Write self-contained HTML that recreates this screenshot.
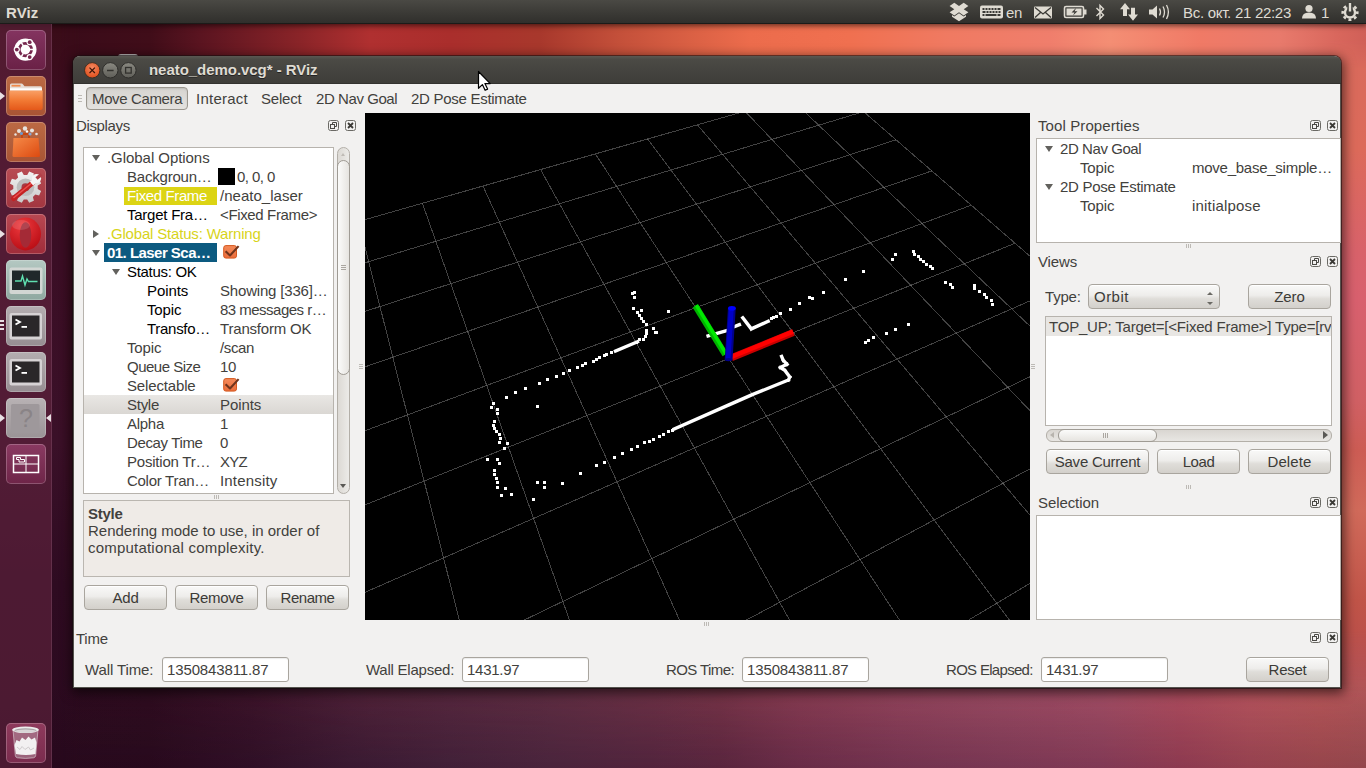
<!DOCTYPE html>
<html><head><meta charset="utf-8"><title>RViz</title>
<style>
*{box-sizing:border-box;margin:0;padding:0}
html,body{width:1366px;height:768px;overflow:hidden}
body{position:relative;font-family:"Liberation Sans",sans-serif;font-size:15px;color:#42413d;background:#2c0a1e;}
.abs,.t,.t2,.b,.box,.inp{position:absolute}
#wall{position:absolute;left:0;top:0;width:1366px;height:768px;background:#2c0a1e;overflow:hidden}
#wall div{position:absolute}
#wb{left:0;top:0;width:1366px;height:768px;background:linear-gradient(90deg,#2b0b1f 0,#2c0c20 150px,#34122a 250px,#401e38 350px,#4a2640 450px,#542b45 550px,#5d2b46 650px,#662c47 720px,#783452 800px,#843c5b 900px,#8c4260 1000px,#954462 1100px,#a3455c 1180px,#ad4e5b 1250px,#af5257 1320px,#ac5458 1366px)}
#wt{left:0;top:0;width:1366px;height:768px;background:linear-gradient(90deg,#36091a 0,#390b19 60px,#400d19 150px,#5a1420 200px,#8a2428 300px,#b03030 370px,#aa2e2c 450px,#a8382c 540px,#c4503a 620px,#da6044 690px,#ec6c4c 750px,#f07050 850px,#f07a62 950px,#f07e6c 1050px,#f48e74 1110px,#f07a66 1200px,#e87a6c 1280px,#d8665c 1340px,#d06058 1366px);
 -webkit-mask-image:linear-gradient(#000 0,#000 60px,rgba(0,0,0,.85) 300px,rgba(0,0,0,.55) 520px,rgba(0,0,0,.15) 680px,transparent 768px);mask-image:linear-gradient(#000 0,#000 60px,rgba(0,0,0,.85) 300px,rgba(0,0,0,.55) 520px,rgba(0,0,0,.15) 680px,transparent 768px)}
#wr{left:1330px;top:40px;width:36px;height:728px;background:linear-gradient(#d86a5c 0,#dc6a5a 110px,#d8626a 210px,#d8606e 260px,#d06064 360px,#cc5c54 410px,#d06a5a 470px,#c05448 560px,#b64c4c 640px,#b04a50 680px,#a84a58 728px);
 -webkit-mask-image:linear-gradient(transparent 0,#000 30px,#000 590px,transparent 652px);mask-image:linear-gradient(transparent 0,#000 30px,#000 590px,transparent 652px)}
#wl{left:0;top:24px;width:80px;height:744px;background:linear-gradient(#3a0c18 0,#3c0d20 80px,#3b0e25 230px,#3a1028 420px,#2e0b21 560px,#2b0a1f 744px);
 -webkit-mask-image:linear-gradient(90deg,#000 0,#000 60px,transparent 80px);mask-image:linear-gradient(90deg,#000 0,#000 60px,transparent 80px)}
#wd{left:0;top:684px;width:1366px;height:84px;background:linear-gradient(rgba(20,0,16,0),rgba(20,0,16,.16))}
/* top panel */
#panel{position:absolute;left:0;top:0;width:1366px;height:24px;background:linear-gradient(#4a4944,#3a3935 60%,#302f2c);color:#dfdbd2;border-bottom:1px solid #1c1b19;box-shadow:0 1px 5px 1px rgba(0,0,0,.55)}
#panel .t{color:#dfdbd2;top:3px;white-space:nowrap}
/* launcher */
#launcher{position:absolute;left:0;top:24px;width:52px;height:744px;background:rgba(98,36,64,.6);border-right:1px solid rgba(150,100,130,.3)}
.tile{position:absolute;left:6px;width:40px;height:40px;border-radius:5px;overflow:hidden;box-shadow:inset 0 0 0 1px rgba(255,255,255,.22)}
.tri{position:absolute;width:0;height:0;border-top:4px solid transparent;border-bottom:4px solid transparent}
.tri.l{left:0;border-left:5px solid #e8e0e4}
.tri.r{left:46px;border-right:5px solid #e8e0e4}
/* window */
#win{position:absolute;left:73px;top:56px;width:1268px;height:632px;background:#f2f1f0;border:1px solid #55534e;border-top:0;border-radius:7px 7px 0 0;box-shadow:1px 3px 12px 2px rgba(0,0,0,.6),0 0 0 1px rgba(30,20,20,.55)}
#title{position:absolute;left:0;top:0;width:1268px;height:28px;border-radius:7px 7px 0 0;background:linear-gradient(#5a5852 0,#4b4a45 12%,#3e3d39 100%);border-bottom:1px solid #33322f}
.t,.t2{white-space:nowrap;line-height:19px;height:19px}
.b{border:1px solid #a9a59e;border-radius:4px;background:linear-gradient(#f9f9f8 0,#eeedeb 45%,#dfddd9 60%,#d3d0cb 100%);text-align:center;line-height:24px;color:#3c3b37;box-shadow:inset 0 1px 0 #fff}
.box{background:#fff;border:1px solid #b7b3ad}
.inp{background:#fff;border:1px solid #a9a59e;border-radius:3px;line-height:23px;padding-left:4px;height:25px;top:657px;width:127px;box-shadow:inset 0 1px 1px rgba(0,0,0,.08)}
.ic{position:absolute;width:11px;height:11px}
.arrow{position:absolute;width:0;height:0}
.ad{border-left:4px solid transparent;border-right:4px solid transparent;border-top:6px solid #62615d}
.ar{border-top:4px solid transparent;border-bottom:4px solid transparent;border-left:6px solid #62615d}
</style></head><body>
<div id="wall"><div id="wb"></div><div id="wt"></div><div id="wr"></div><div id="wl"></div><div id="wd"></div></div>
<div id="panel">
<div class="t" style="left:6px;font-weight:bold;font-size:15px;letter-spacing:0.133px">RViz</div>
<svg class="abs" style="left:948px;top:2px" width="420" height="20" viewBox="948 2 420 20" fill="#dfdbd2" stroke="none">
<!-- dropbox-like -->
<path d="M954.300 2.800l4.700 3.200-4.700 3.200-4.700-3.200zM963.700 2.800l4.700 3.200-4.700 3.200-4.700-3.200zM959 6l4.700 3.200 4.700 3.100-4.700 3.200-4.700-3.200-4.700 3.200-4.700-3.200 4.700-3.100zM959 13.300l4.700 3.200 2.300-1.500v1.800l-7 4.400-7-4.400v-1.800l2.300 1.500z"/>
<!-- keyboard -->
<rect x="980" y="5.500" width="23" height="13" rx="2"/>
<g fill="#3a3935"><rect x="982.500" y="8" width="2" height="2"/><rect x="985.500" y="8" width="2" height="2"/><rect x="988.500" y="8" width="2" height="2"/><rect x="991.500" y="8" width="2" height="2"/><rect x="994.500" y="8" width="2" height="2"/><rect x="997.500" y="8" width="3" height="2"/>
<rect x="982.500" y="11" width="3" height="2"/><rect x="986.500" y="11" width="2" height="2"/><rect x="989.500" y="11" width="2" height="2"/><rect x="992.500" y="11" width="2" height="2"/><rect x="995.500" y="11" width="2" height="2"/><rect x="998.500" y="11" width="2" height="2"/>
<rect x="982.500" y="14" width="2" height="2"/><rect x="985.500" y="14" width="11" height="2"/><rect x="997.500" y="14" width="3" height="2"/></g>
<!-- mail -->
<rect x="1034" y="6.500" width="18" height="12" rx="1"/>
<path d="M1035 7.500l8 6.500 8-6.500M1035 17.500l5.500-5M1051 17.500l-5.500-5" stroke="#3a3935" stroke-width="1.300" fill="none"/>
<!-- battery -->
<rect x="1064.500" y="6.500" width="19" height="11" rx="1.500" fill="none" stroke="#dfdbd2" stroke-width="1.600"/>
<rect x="1084" y="9.500" width="2.500" height="5"/>
<rect x="1066.500" y="8.500" width="15" height="7" fill="#dfdbd2"/>
<path d="M1075.500 8.500l-4 4h3l-1.500 3 4.500-4.200h-3l1.500-2.800z" fill="#3a3935"/>
<!-- bluetooth -->
<path d="M1096.500 8l7 7-3.500 3.500v-13l3.500 3.500-7 7" fill="none" stroke="#dfdbd2" stroke-width="1.400"/>
<!-- network arrows -->
<path d="M1125 3l5 6.200h-3v6.800h-4v-6.800h-3z"/>
<path d="M1133 20.800l-5-6.200h3v-6.800h4v6.800h3z"/>
<!-- sound -->
<path d="M1149 9.500h3.500l4.500-4v13l-4.500-4h-3.500z"/>
<path d="M1159.500 8.500q2 3.500 0 7M1163 6.500q3 5.500 0 11M1166.500 5q3.800 7 0 14" fill="none" stroke="#dfdbd2" stroke-width="1.300"/>
<!-- user -->
<circle cx="1309" cy="8.500" r="3.600"/>
<path d="M1302 18.500q0-6 7-6t7 6z"/>
<!-- power cog -->
<g transform="translate(1350 12.500)"><circle r="7.300" fill="none" stroke="#dfdbd2" stroke-width="2.600" stroke-dasharray="2.900 2.834" stroke-dashoffset="1.450"/>
<circle r="5" fill="none" stroke="#dfdbd2" stroke-width="2.400"/><rect x="-2.700" y="-10" width="5.400" height="9" fill="#3d3c38"/><rect x="-1.200" y="-9.500" width="2.400" height="8.500" fill="#dfdbd2"/></g>
</svg>
<div class="t" style="left:1006px;font-size:15px;letter-spacing:-0.344px">en</div>
<div class="t" style="left:1183px;font-size:15px;letter-spacing:-0.286px" id="clock">Вс. окт. 21 22:23</div>
<div class="t" style="left:1321px;font-size:15px">1</div>
</div>

<div id="launcher">
<!-- tops are relative to launcher (panel 24px) -->
<div class="tile" style="top:6px;background:linear-gradient(#843460,#6a2146)">
<svg width="40" height="40" viewBox="0 0 40 40"><circle cx="19.4" cy="19.6" r="11.1" fill="#fff"/><circle cx="19.4" cy="19.6" r="6.2" fill="none" stroke="#76284e" stroke-width="2.7"/><line x1="23.70" y1="19.60" x2="27.70" y2="19.60" stroke="#fff" stroke-width="1.5"/><line x1="17.25" y1="23.32" x2="15.25" y2="26.79" stroke="#fff" stroke-width="1.5"/><line x1="17.25" y1="15.88" x2="15.25" y2="12.41" stroke="#fff" stroke-width="1.5"/><circle cx="23.70" cy="12.15" r="3.1" fill="#fff"/><circle cx="23.70" cy="12.15" r="1.9" fill="#76284e"/><circle cx="10.80" cy="19.60" r="3.1" fill="#fff"/><circle cx="10.80" cy="19.60" r="1.9" fill="#76284e"/><circle cx="23.70" cy="27.05" r="3.1" fill="#fff"/><circle cx="23.70" cy="27.05" r="1.9" fill="#76284e"/></svg></div>
<div class="tile" style="top:52px;background:linear-gradient(#bc6a44,#a85434)">
<svg width="40" height="40" viewBox="0 0 40 40"><defs><linearGradient id="fg" x1="0" y1="0" x2="0" y2="1"><stop offset="0" stop-color="#f9a066"/><stop offset=".5" stop-color="#f27a34"/><stop offset="1" stop-color="#e4581a"/></linearGradient></defs>
<path d="M4 9q0-1.500 1.500-1.500h10q1 0 1.600.9l1.400 1.900h16q1.500 0 1.500 1.500v4h-32z" fill="#e6ddd6"/><rect x="5.500" y="8.800" width="9" height="1.800" fill="#f08848"/><rect x="4" y="12.300" width="32" height="2.200" fill="#fff"/>
<path d="M3.300 14.500h33.400v17.500q0 2-2 2h-29.400q-2 0-2-2z" fill="url(#fg)"/></svg></div>
<div class="tile" style="top:98px;background:linear-gradient(#bc6a44,#a85434)">
<svg width="40" height="40" viewBox="0 0 40 40"><defs><linearGradient id="bg2" x1="0" y1="0" x2="1" y2="1"><stop offset="0" stop-color="#f68a48"/><stop offset="1" stop-color="#dc4a10"/></linearGradient></defs>
<path d="M16 17v-3.500q0-1.500 1.500-1.500h4q1.500 0 1.500 1.500v3.500" stroke="#c8440e" stroke-width="1.800" fill="none"/>
<path d="M7.500 16h25l1.500 17.500q0 1.500-1.500 1.500h-24.500q-1.500 0-1.500-1.500z" fill="url(#bg2)"/>
<g fill="#e8e4e0"><circle cx="13" cy="9" r="2"/><circle cx="19" cy="6.500" r="2.200"/><circle cx="26" cy="8.500" r="2"/><circle cx="30.500" cy="12" r="1.300"/><circle cx="9.500" cy="12.500" r="1.200"/></g><circle cx="15.500" cy="11.500" r="1.500" fill="#6a9ad0"/><circle cx="24" cy="12" r="1.600" fill="#88a8d8"/><circle cx="21" cy="9.500" r="1.200" fill="#fff"/></svg></div>
<div class="tile" style="top:144px;background:linear-gradient(#b84c54,#a23640)">
<svg width="40" height="40" viewBox="0 0 40 40"><defs><linearGradient id="gg" x1="0" y1="0" x2="0" y2="1"><stop offset="0" stop-color="#f2f2f2"/><stop offset="1" stop-color="#c9c9c9"/></linearGradient></defs>
<path d="M31.7 20.9L35.1 22.9L33.1 27.6L29.3 26.6L26.9 29.0L27.9 32.8L23.2 34.8L21.2 31.4L17.8 31.4L15.8 34.8L11.1 32.8L12.1 29.0L9.7 26.6L5.9 27.6L3.9 22.9L7.3 20.9L7.3 17.5L3.9 15.5L5.9 10.8L9.7 11.8L12.1 9.4L11.1 5.6L15.8 3.6L17.8 7.0L21.2 7.0L23.2 3.6L27.9 5.6L26.9 9.4L29.3 11.8L33.1 10.8L35.1 15.5L31.7 17.5z" fill="url(#gg)"/><circle cx="19.5" cy="19.2" r="8.8" fill="#bdbdbd"/><circle cx="19.5" cy="19.2" r="4" fill="#a63a44"/>
<path d="M7.500 30.500l19.500-16" stroke="#c42222" stroke-width="5" stroke-linecap="round"/><path d="M8 29.500l19-15.500" stroke="#e85050" stroke-width="1.600" stroke-linecap="round"/>
<path d="M25.500 15.500l3.500-3" stroke="#f4f4f4" stroke-width="5"/><circle cx="30.500" cy="10.500" r="4.600" fill="#f4f4f4"/><path d="M30.500 10.500l5-4" stroke="#b04048" stroke-width="3.400"/></svg></div>
<div class="tile" style="top:190px;background:linear-gradient(#b84852,#a02c3a)">
<svg width="40" height="40" viewBox="0 0 40 40"><defs><radialGradient id="og" cx="40%" cy="25%" r="80%"><stop offset="0" stop-color="#ee3a3e"/><stop offset="1" stop-color="#b80c14"/></radialGradient></defs>
<ellipse cx="19.500" cy="20" rx="15.500" ry="16.400" fill="url(#og)"/><ellipse cx="19.500" cy="21" rx="5.800" ry="12.800" fill="#a42a36"/><ellipse cx="15" cy="11" rx="9" ry="5" fill="#fff" opacity=".13"/></svg></div>
<div class="tile" style="top:236px;background:linear-gradient(#b4c8c2,#8fa8a0)">
<svg width="40" height="40" viewBox="0 0 40 40"><rect x="3.500" y="7.500" width="33" height="26.500" rx="2" fill="#d2d6d3"/><rect x="6" y="10.500" width="28" height="19.500" fill="#20282a"/><path d="M9 21h6l1.500-5 2.500 9 2-6 1.500 2.500h9" stroke="#5fe0b0" stroke-width="1.400" fill="none"/></svg></div>
<div class="tile" style="top:282px;background:linear-gradient(#b4adb0,#968e92)">
<svg width="40" height="40" viewBox="0 0 40 40"><rect x="3.500" y="7" width="32.500" height="26.500" rx="2" fill="#d6d2d4"/><rect x="6" y="9.500" width="27.500" height="21" fill="#2a2729"/><path d="M9.500 13.500l4.500 2.500-4.500 2.500" stroke="#fff" stroke-width="1.800" fill="none"/><rect x="15.500" y="20" width="5.500" height="1.800" fill="#fff"/></svg></div>
<div class="tile" style="top:328px;background:linear-gradient(#b4adb0,#968e92)">
<svg width="40" height="40" viewBox="0 0 40 40"><rect x="3.500" y="7" width="32.500" height="26.500" rx="2" fill="#d6d2d4"/><rect x="6" y="9.500" width="27.500" height="21" fill="#2a2729"/><path d="M9.500 13.500l4.500 2.500-4.500 2.500" stroke="#fff" stroke-width="1.800" fill="none"/><rect x="15.500" y="20" width="5.500" height="1.800" fill="#fff"/></svg></div>
<div class="tile" style="top:374px;background:linear-gradient(#b8b2b4,#9a9396)">
<svg width="40" height="40" viewBox="0 0 40 40"><rect x="5" y="6" width="28.500" height="28.500" rx="1.500" fill="#9e989b"/><text x="20" y="29" font-family="Liberation Sans,sans-serif" font-size="25" text-anchor="middle" fill="#8a8487">?</text></svg></div>
<div class="tile" style="top:420px;background:linear-gradient(#8a3a62,#6e2548)">
<svg width="40" height="40" viewBox="0 0 40 40"><rect x="7.500" y="11.500" width="25" height="17" fill="none" stroke="#fff" stroke-width="1.500"/><line x1="20" y1="11.500" x2="20" y2="28.500" stroke="#fff" stroke-width="1"/><line x1="7.500" y1="20" x2="32.500" y2="20" stroke="#fff" stroke-width="1"/><path d="M10.500 13.500h4v2h4v2.500h-5.500v-2.500h-2.500z" fill="none" stroke="#fff" stroke-width="1"/></svg></div>
<div class="tile" style="top:699px;background:linear-gradient(#8e3a5c,#7a2c4e)">
<svg width="40" height="40" viewBox="0 0 40 40"><path d="M7 6.500l2.300 26q.2 2 2.200 2.300 8 1.200 16 0 2-.3 2.200-2.300l2.300-26z" fill="#d8d0d6" opacity=".33"/>
<path d="M8.500 22l2-5 3 1.500 2.500-4 3.500 2.500 3-3.500 3 3 3.500-2 1.500 5-1 11.500q-9.500 2-19.500 0z" fill="#f2f0f1"/>
<path d="M11 24l3 2.500 2-3 3 3 3.500-2.500 2 3 3.500-2" stroke="#cfcbcd" stroke-width="1" fill="none"/>
<path d="M7 6.500l2.300 26q.2 2 2.200 2.300 8 1.200 16 0 2-.3 2.200-2.300l2.300-26" fill="none" stroke="#e6e2e4" stroke-width=".8" opacity=".7"/>
<ellipse cx="19.500" cy="6.800" rx="13.300" ry="3.300" fill="#ecebeb"/><ellipse cx="19.500" cy="7.300" rx="11.200" ry="2" fill="#a9a3a6"/><ellipse cx="19.500" cy="8.100" rx="10.500" ry="1.500" fill="#d9d5d7"/></svg></div>
<div class="tri l" style="top:68px"></div>
<div class="tri l" style="top:206px"></div>
<div class="tri l" style="top:390px"></div>
<div class="tri r" style="top:390px"></div>
<div class="abs" style="left:0;top:296px;width:4px;height:2px;background:#e8e0e4;box-shadow:0 4px 0 #e8e0e4,0 8px 0 #e8e0e4"></div>
</div>

<div class="abs" style="left:118px;top:54px;width:20px;height:4px;background:#b9b4b4;border-radius:3px 3px 0 0"></div>
<div id="win"><div id="title" style="left:-1px"></div>
<div id="wc" class="abs" style="left:-74px;top:-56px;width:0;height:0">
<!-- title bar -->
<svg class="abs" style="left:82px;top:60px" width="60" height="22" viewBox="82 60 60 22">
<defs><radialGradient id="cb" cx="50%" cy="35%" r="70%"><stop offset="0" stop-color="#f58a62"/><stop offset="1" stop-color="#dd4814"/></radialGradient>
<linearGradient id="gb" x1="0" y1="0" x2="0" y2="1"><stop offset="0" stop-color="#8a8981"/><stop offset="1" stop-color="#5f5e58"/></linearGradient></defs>
<circle cx="92.200" cy="70.300" r="7.700" fill="url(#cb)" stroke="#3a3026" stroke-width="1"/>
<path d="M89.500 67.600l5.400 5.400M94.900 67.600l-5.400 5.400" stroke="#3a1408" stroke-width="1.200"/>
<circle cx="110.300" cy="70.300" r="7.700" fill="url(#gb)" stroke="#2e2d2a" stroke-width="1"/>
<path d="M107 70.500h6.600" stroke="#33322e" stroke-width="1.500"/>
<circle cx="128.400" cy="70.300" r="7.700" fill="url(#gb)" stroke="#2e2d2a" stroke-width="1"/>
<rect x="125.600" y="67.500" width="5.600" height="5.600" fill="none" stroke="#33322e" stroke-width="1.300"/>
</svg>
<div class="t" id="wtitle" style="left:149px;top:60px;font-weight:bold;font-size:15px;color:#dfdbd2;text-shadow:0 1px 0 #222;letter-spacing:-0.045px">neato_demo.vcg* - RViz</div>
<!-- toolbar -->
<div class="abs" style="left:78px;top:95px;width:4px;height:1px;background:#bdbab5;box-shadow:0 3px 0 #bdbab5,0 6px 0 #bdbab5"></div>
<div class="abs" style="left:86px;top:87px;width:102px;height:23px;border:1px solid #9b978f;border-radius:4px;background:linear-gradient(#d6d4d0,#e4e2df);box-shadow:inset 0 1px 2px rgba(0,0,0,.12)"></div>
<div class="t tb" style="left:92px;top:89px;letter-spacing:-0.364px">Move Camera</div>
<div class="t tb" style="left:196px;top:89px;letter-spacing:0.246px">Interact</div>
<div class="t tb" style="left:261px;top:89px;letter-spacing:-0.201px">Select</div>
<div class="t tb" style="left:316px;top:89px;letter-spacing:-0.425px">2D Nav Goal</div>
<div class="t tb" style="left:411px;top:89px;letter-spacing:-0.279px">2D Pose Estimate</div>
<!-- Displays dock -->
<div class="t" style="left:76px;top:116px;letter-spacing:-0.348px">Displays</div>
<svg class="abs" style="left:328px;top:120px" width="28" height="11" viewBox="0 0 28 11" fill="none" stroke="#4a4945"><rect x=".5" y=".5" width="10" height="10" rx="2" stroke="#6a6964"/><rect x="2.500" y="4.500" width="4" height="4" stroke-width="1"/><path d="M4.500 4v-1.500h4v4h-1.500" stroke-width="1"/><rect x="17.500" y=".5" width="10" height="10" rx="2" stroke="#6a6964"/><path d="M20 3l5 5M25 3l-5 5" stroke-width="1.800" stroke="#3a3935"/></svg>
<div class="box" style="left:83px;top:147px;width:251px;height:347px"></div>
<div class="abs" style="left:124px;top:187px;width:93px;height:18px;background:#dcd414"></div>
<div class="abs" style="left:104px;top:243px;width:113px;height:19px;background:#0c5a80"></div>
<div class="abs" style="left:84px;top:395px;width:249px;height:19px;background:linear-gradient(#e9e7e4,#dad7d3)"></div>
<div class="arrow ad" style="left:92px;top:155px"></div>
<div class="t" style="left:107px;top:148px;letter-spacing:-0.053px">.Global Options</div>
<div class="t" style="left:127px;top:167px;letter-spacing:-0.212px">Backgroun…</div>
<div class="abs" style="left:218px;top:168px;width:17px;height:17px;background:#000"></div>
<div class="t" style="left:237px;top:167px;letter-spacing:-0.558px">0, 0, 0</div>
<div class="t" style="left:127px;top:186px;color:#fff;letter-spacing:-0.390px">Fixed Frame</div>
<div class="t" style="left:220px;top:186px;letter-spacing:0.020px">/neato_laser</div>
<div class="t" style="left:127px;top:205px;color:#000;letter-spacing:-0.242px">Target Fra…</div>
<div class="t" style="left:220px;top:205px;letter-spacing:-0.355px">&lt;Fixed Frame&gt;</div>
<div class="arrow ar" style="left:93px;top:230px"></div>
<div class="t" style="left:107px;top:224px;color:#d8d41a;letter-spacing:-0.181px">.Global Status: Warning</div>
<div class="arrow ad" style="left:92px;top:250px"></div>
<div class="t" style="left:107px;top:243px;color:#fff;font-weight:bold;letter-spacing:-0.536px">01. Laser Sca…</div>
<svg class="abs" style="left:223px;top:244px" width="18" height="16" viewBox="0 0 18 16"><defs><linearGradient id="ck" x1="0" y1="0" x2="0" y2="1"><stop offset="0" stop-color="#f48a5a"/><stop offset="1" stop-color="#ea6c3a"/></linearGradient></defs><rect x=".7" y="1.600" width="12.800" height="12.500" rx="2.200" fill="url(#ck)" stroke="#d4581e"/><path d="M2.600 7.200l4.400 4.300 8.600-9.400" fill="none" stroke="#70341c" stroke-width="2.100" stroke-linejoin="round"/></svg>
<div class="arrow ad" style="left:112px;top:269px"></div>
<div class="t" style="left:127px;top:262px;color:#000;letter-spacing:-0.305px">Status: OK</div>
<div class="t" style="left:147px;top:281px;color:#000;letter-spacing:-0.084px">Points</div>
<div class="t" style="left:220px;top:281px;letter-spacing:-0.184px">Showing [336]…</div>
<div class="t" style="left:147px;top:300px;color:#000;letter-spacing:-0.126px">Topic</div>
<div class="t" style="left:220px;top:300px;letter-spacing:-0.514px">83 messages r…</div>
<div class="t" style="left:147px;top:319px;color:#000;letter-spacing:-0.287px">Transfo…</div>
<div class="t" style="left:220px;top:319px;letter-spacing:-0.187px">Transform OK</div>
<div class="t" style="left:127px;top:338px;letter-spacing:-0.126px">Topic</div>
<div class="t" style="left:220px;top:338px;letter-spacing:-0.352px">/scan</div>
<div class="t" style="left:127px;top:357px;letter-spacing:-0.499px">Queue Size</div>
<div class="t" style="left:220px;top:357px;letter-spacing:-0.444px">10</div>
<div class="t" style="left:127px;top:376px;letter-spacing:-0.156px">Selectable</div>
<svg class="abs" style="left:223px;top:377px" width="18" height="16" viewBox="0 0 18 16"><defs><linearGradient id="ck" x1="0" y1="0" x2="0" y2="1"><stop offset="0" stop-color="#f48a5a"/><stop offset="1" stop-color="#ea6c3a"/></linearGradient></defs><rect x=".7" y="1.600" width="12.800" height="12.500" rx="2.200" fill="url(#ck)" stroke="#d4581e"/><path d="M2.600 7.200l4.400 4.300 8.600-9.400" fill="none" stroke="#70341c" stroke-width="2.100" stroke-linejoin="round"/></svg>
<div class="t" style="left:127px;top:395px;letter-spacing:-0.272px">Style</div>
<div class="t" style="left:220px;top:395px;letter-spacing:-0.084px">Points</div>
<div class="t" style="left:127px;top:414px;letter-spacing:-0.275px">Alpha</div>
<div class="t" style="left:220px;top:414px">1</div>
<div class="t" style="left:127px;top:433px;letter-spacing:-0.370px">Decay Time</div>
<div class="t" style="left:220px;top:433px">0</div>
<div class="t" style="left:127px;top:452px;letter-spacing:-0.215px">Position Tr…</div>
<div class="t" style="left:220px;top:452px;letter-spacing:-0.700px">XYZ</div>
<div class="t" style="left:127px;top:471px;letter-spacing:-0.276px">Color Tran…</div>
<div class="t" style="left:220px;top:471px;letter-spacing:0.181px">Intensity</div>
<!-- scrollbar -->
<div class="abs" style="left:337px;top:147px;width:13px;height:347px;border:1px solid #b3afa8;border-radius:6.5px;background:linear-gradient(90deg,#dcd9d4,#ecebe8)"></div>
<div class="abs" style="left:337px;top:160px;width:13px;height:215px;border:1px solid #9f9b94;border-radius:6.5px;background:linear-gradient(90deg,#fbfbfa,#e6e4e0)"></div>
<div class="abs" style="left:341px;top:265px;width:5px;height:1px;background:#aaa6a0;box-shadow:0 2px 0 #aaa6a0,0 4px 0 #aaa6a0"></div>
<div class="arrow" style="left:341px;top:153px;border-left:2.5px solid transparent;border-right:2.5px solid transparent;border-bottom:3px solid #c0bcb6"></div>
<div class="arrow" style="left:340px;top:484px;border-left:3.5px solid transparent;border-right:3.5px solid transparent;border-top:4px solid #5a5955"></div>
<!-- description -->
<div class="abs" style="left:83px;top:500px;width:267px;height:77px;background:#efebe7;border:1px solid #bab6b0"></div>
<div class="t2" style="left:88px;top:504px;font-weight:bold;letter-spacing:-0.1px;letter-spacing:-0.272px">Style</div>
<div class="t" style="left:88px;top:521px;letter-spacing:-0.015px" id="d1">Rendering mode to use, in order of</div>
<div class="t" style="left:88px;top:538px;letter-spacing:0.205px" id="d2">computational complexity.</div>
<div class="b" style="left:84px;top:585px;width:83px;height:25px;letter-spacing:-0.201px">Add</div>
<div class="b" style="left:175px;top:585px;width:83px;height:25px;letter-spacing:-0.327px">Remove</div>
<div class="b" style="left:266px;top:585px;width:83px;height:25px;letter-spacing:-0.467px">Rename</div>
<!-- splitter grips -->
<div class="abs" style="left:214px;top:495px;width:1px;height:4px;background:#bdbab5;box-shadow:2px 0 0 #bdbab5,4px 0 0 #bdbab5"></div>
<div class="abs" style="left:704px;top:622px;width:1px;height:4px;background:#bdbab5;box-shadow:2px 0 0 #bdbab5,4px 0 0 #bdbab5"></div>
<div class="abs" style="left:359px;top:364px;width:4px;height:1px;background:#bdbab5;box-shadow:0 2px 0 #bdbab5,0 4px 0 #bdbab5"></div>
<div class="abs" style="left:1031px;top:364px;width:4px;height:1px;background:#bdbab5;box-shadow:0 2px 0 #bdbab5,0 4px 0 #bdbab5"></div>
<div class="abs" style="left:1186px;top:244px;width:1px;height:4px;background:#bdbab5;box-shadow:2px 0 0 #bdbab5,4px 0 0 #bdbab5"></div>
<div class="abs" style="left:1186px;top:485px;width:1px;height:4px;background:#bdbab5;box-shadow:2px 0 0 #bdbab5,4px 0 0 #bdbab5"></div>
<!-- 3D view -->
<svg class="view" style="position:absolute;left:365px;top:113px" width="665" height="507" viewBox="365 113 665 507">
<rect x="365" y="113" width="665" height="507" fill="#000"/>
<path d="M428.3 1138.3L291.1 240.8M566.6 1044.3L358.5 221.6M689.6 960.6L422.4 203.3M799.8 885.7L483.0 186.0M899.0 818.2L540.6 169.6M988.9 757.1L595.4 153.9M1070.7 701.5L647.6 139.0M1145.5 650.7L697.4 124.8M1214.0 604.1L745.0 111.2M1277.1 561.2L790.4 98.3M1335.4 521.6L833.9 85.8" stroke="#848484" stroke-opacity=".5" stroke-width="1" fill="none" shape-rendering="crispEdges"/>
<path d="M428.3 1138.3L1335.4 521.6M401.0 959.3L1253.1 450.0M379.0 815.9L1181.7 388.0M361.1 698.5L1119.2 333.8M346.1 600.6L1064.1 285.9M333.4 517.6L1015.1 243.3M322.6 446.5L971.3 205.2M313.1 384.8L931.8 170.9M304.9 330.8L896.1 139.8M297.6 283.2L863.6 111.6M291.1 240.8L833.9 85.8" stroke="#848484" stroke-opacity=".5" stroke-width="1" fill="none" shape-rendering="crispEdges"/>
<path d="M538 382h3v3h-3zM546 378h3v3h-3zM524 387h3v3h-3zM514 391h3v3h-3zM505 396h3v3h-3zM492 402h3v3h-3zM490 406h3v3h-3zM496 408h3v3h-3zM496 412h3v3h-3zM536 405h3v3h-3zM493 420h3v3h-3zM492 424h3v3h-3zM493 427h3v3h-3zM495 430h3v3h-3zM498 433h3v3h-3zM499 437h3v3h-3zM498 441h3v3h-3zM506 442h3v3h-3zM503 447h3v3h-3zM486 458h3v3h-3zM496 458h3v3h-3zM498 462h3v3h-3zM493 469h3v3h-3zM493 473h3v3h-3zM495 477h3v3h-3zM496 481h3v3h-3zM496 486h3v3h-3zM504 487h3v3h-3zM500 494h3v3h-3zM510 493h3v3h-3zM536 481h3v3h-3zM543 481h3v3h-3zM543 486h3v3h-3zM532 498h3v3h-3zM561 482h3v3h-3zM579 472h3v3h-3zM595 464h3v3h-3zM603 461h3v3h-3zM613 456h3v3h-3zM631 292h3v3h-3zM633 291h3v3h-3zM633 296h3v3h-3zM632 307h3v3h-3zM640 309h3v3h-3zM636 311h3v3h-3zM638 314h3v3h-3zM640 317h3v3h-3zM642 320h3v3h-3zM645 323h3v3h-3zM667 310h3v3h-3zM652 327h3v3h-3zM654 331h3v3h-3zM655 331h3v3h-3zM645 329h3v3h-3zM645 332h3v3h-3zM644 335h3v3h-3zM642 338h3v3h-3zM638 338h3v3h-3zM635 341h3v3h-3zM610 351h3v3h-3zM605 353h3v3h-3zM603 354h3v3h-3zM598 356h3v3h-3zM595 358h3v3h-3zM592 360h3v3h-3zM584 362h3v3h-3zM581 364h3v3h-3zM576 366h3v3h-3zM568 369h3v3h-3zM562 372h3v3h-3zM555 375h3v3h-3zM546 378h3v3h-3zM538 382h3v3h-3zM770 317h3v3h-3zM772 316h3v3h-3zM775 315h3v3h-3zM779 312h3v3h-3zM789 308h3v3h-3zM798 302h3v3h-3zM808 296h3v3h-3zM621 452h3v3h-3zM630 448h3v3h-3zM636 445h3v3h-3zM643 441h3v3h-3zM648 440h3v3h-3zM652 438h3v3h-3zM658 435h3v3h-3zM662 433h3v3h-3zM667 430h3v3h-3zM671 429h3v3h-3zM811 297h3v3h-3zM822 291h3v3h-3zM844 278h3v3h-3zM862 270h3v3h-3zM891 258h3v3h-3zM894 253h3v3h-3zM912 250h3v3h-3zM913 253h3v3h-3zM917 255h3v3h-3zM919 258h3v3h-3zM922 260h3v3h-3zM925 263h3v3h-3zM929 265h3v3h-3zM931 267h3v3h-3zM944 281h3v3h-3zM949 283h3v3h-3zM951 286h3v3h-3zM973 284h3v3h-3zM973 287h3v3h-3zM978 290h3v3h-3zM983 293h3v3h-3zM985 296h3v3h-3zM990 299h3v3h-3zM991 303h3v3h-3zM864 341h3v3h-3zM867 339h3v3h-3zM872 336h3v3h-3zM885 332h3v3h-3zM894 328h3v3h-3zM907 323h3v3h-3z" fill="#fff" shape-rendering="crispEdges"/>
<path d="M615.5 351.1L637.5 341.8M708.1 336.0L726.7 330.6M735.2 326.4L739.4 324.7M742.8 317.9L751.3 328.9M751.3 328.9L768.2 321.3M674.1 429.1L730.0 404.4M730.0 404.4L751.7 394.9M751.7 394.9L788.4 380.0M781.6 356.5L783.2 360.2M783.2 360.2L787.0 364.3M787.0 364.3L780.3 367.5M780.3 367.5L784.8 370.4M784.8 370.4L789.8 377.0M789.8 377.0L788.4 380.0" stroke="#fff" stroke-width="3.4" stroke-linecap="square" fill="none"/>
<line x1="725.3" y1="354.6" x2="695.4" y2="305.8" stroke="#00b400" stroke-width="6.4"/>
<line x1="726.2" y1="354.0" x2="696.2" y2="305.2" stroke="#00e800" stroke-width="3.4"/>
<line x1="731.5" y1="357.8" x2="793.4" y2="332.4" stroke="#c80000" stroke-width="7"/>
<line x1="731.2" y1="357.0" x2="793.0" y2="331.6" stroke="#ff0000" stroke-width="4.4"/>
<line x1="728.6" y1="359.6" x2="731.8" y2="308.5" stroke="#00008c" stroke-width="7.8"/>
<line x1="728.1" y1="359.0" x2="731.3" y2="308.5" stroke="#0000c8" stroke-width="4.8"/>
<ellipse cx="731.9" cy="308.2" rx="3.9" ry="2.3" fill="#0000ff"/>
<ellipse cx="728.5" cy="359.6" rx="3.9" ry="1.7" fill="#00008c"/>
</svg>
<!-- Tool properties -->
<div class="t" style="left:1038px;top:116px;letter-spacing:0.102px">Tool Properties</div>
<svg class="abs" style="left:1310px;top:120px" width="28" height="11" viewBox="0 0 28 11" fill="none" stroke="#4a4945"><rect x=".5" y=".5" width="10" height="10" rx="2" stroke="#6a6964"/><rect x="2.500" y="4.500" width="4" height="4" stroke-width="1"/><path d="M4.500 4v-1.500h4v4h-1.500" stroke-width="1"/><rect x="17.500" y=".5" width="10" height="10" rx="2" stroke="#6a6964"/><path d="M20 3l5 5M25 3l-5 5" stroke-width="1.800" stroke="#3a3935"/></svg>
<div class="box" style="left:1036px;top:138px;width:305px;height:105px"></div>
<div class="arrow ad" style="left:1045px;top:146px"></div>
<div class="t" style="left:1060px;top:139px;letter-spacing:-0.425px">2D Nav Goal</div>
<div class="t" style="left:1080px;top:158px;letter-spacing:-0.126px">Topic</div>
<div class="t" style="left:1192px;top:158px;letter-spacing:-0.256px">move_base_simple…</div>
<div class="arrow ad" style="left:1045px;top:184px"></div>
<div class="t" style="left:1060px;top:177px;letter-spacing:-0.279px">2D Pose Estimate</div>
<div class="t" style="left:1080px;top:196px;letter-spacing:-0.126px">Topic</div>
<div class="t" style="left:1192px;top:196px;letter-spacing:0.189px">initialpose</div>
<!-- Views -->
<div class="t" style="left:1038px;top:252px;letter-spacing:-0.130px">Views</div>
<svg class="abs" style="left:1310px;top:256px" width="28" height="11" viewBox="0 0 28 11" fill="none" stroke="#4a4945"><rect x=".5" y=".5" width="10" height="10" rx="2" stroke="#6a6964"/><rect x="2.500" y="4.500" width="4" height="4" stroke-width="1"/><path d="M4.500 4v-1.500h4v4h-1.500" stroke-width="1"/><rect x="17.500" y=".5" width="10" height="10" rx="2" stroke="#6a6964"/><path d="M20 3l5 5M25 3l-5 5" stroke-width="1.800" stroke="#3a3935"/></svg>
<div class="t" style="left:1045px;top:287px;letter-spacing:-0.197px">Type:</div>
<div class="b" style="left:1088px;top:284px;width:132px;height:25px;text-align:left;padding-left:5px;letter-spacing:0.477px">Orbit</div>
<div class="arrow" style="left:1207px;top:292px;border-left:3px solid transparent;border-right:3px solid transparent;border-bottom:3px solid #6a6964"></div>
<div class="arrow" style="left:1207px;top:302px;border-left:3px solid transparent;border-right:3px solid transparent;border-top:3px solid #6a6964"></div>
<div class="b" style="left:1248px;top:284px;width:83px;height:25px;letter-spacing:-0.111px">Zero</div>
<div class="box" style="left:1045px;top:316px;width:287px;height:110px"></div>
<div class="abs" style="left:1046px;top:317px;width:285px;height:19px;background:#e8e6e3"></div>
<div class="abs" style="left:1046px;top:317px;width:285px;height:19px;overflow:hidden"><div class="t2" style="left:3px;top:0;letter-spacing:-0.2px" id="topup">TOP_UP; Target=[&lt;Fixed Frame&gt;] Type=[rviz::OrbitViewController]</div></div>
<div class="abs" style="left:1046px;top:429px;width:286px;height:13px;border:1px solid #b3afa8;border-radius:6px;background:linear-gradient(#d9d6d1,#e8e6e3)"></div>
<div class="abs" style="left:1058px;top:429px;width:99px;height:13px;border:1px solid #9f9b94;border-radius:6px;background:linear-gradient(#fbfbfa,#e6e4e0)"></div>
<div class="abs" style="left:1103px;top:433px;width:1px;height:5px;background:#aaa6a0;box-shadow:2px 0 0 #aaa6a0,4px 0 0 #aaa6a0"></div>
<div class="arrow" style="left:1050px;top:432px;border-top:3px solid transparent;border-bottom:3px solid transparent;border-right:4px solid #b8b4ae"></div>
<div class="arrow" style="left:1323px;top:431px;border-top:4px solid transparent;border-bottom:4px solid transparent;border-left:5px solid #5a5955"></div>
<div class="b" style="left:1046px;top:449px;width:103px;height:25px;letter-spacing:-0.240px">Save Current</div>
<div class="b" style="left:1157px;top:449px;width:83px;height:25px;letter-spacing:-0.419px">Load</div>
<div class="b" style="left:1248px;top:449px;width:83px;height:25px;letter-spacing:0.107px">Delete</div>
<!-- Selection -->
<div class="t" style="left:1038px;top:493px;letter-spacing:-0.080px">Selection</div>
<svg class="abs" style="left:1310px;top:497px" width="28" height="11" viewBox="0 0 28 11" fill="none" stroke="#4a4945"><rect x=".5" y=".5" width="10" height="10" rx="2" stroke="#6a6964"/><rect x="2.500" y="4.500" width="4" height="4" stroke-width="1"/><path d="M4.500 4v-1.500h4v4h-1.500" stroke-width="1"/><rect x="17.500" y=".5" width="10" height="10" rx="2" stroke="#6a6964"/><path d="M20 3l5 5M25 3l-5 5" stroke-width="1.800" stroke="#3a3935"/></svg>
<div class="box" style="left:1036px;top:515px;width:305px;height:105px"></div>
<!-- Time -->
<div class="t" style="left:76px;top:629px;letter-spacing:-0.245px">Time</div>
<svg class="abs" style="left:1310px;top:632px" width="28" height="11" viewBox="0 0 28 11" fill="none" stroke="#4a4945"><rect x=".5" y=".5" width="10" height="10" rx="2" stroke="#6a6964"/><rect x="2.500" y="4.500" width="4" height="4" stroke-width="1"/><path d="M4.500 4v-1.500h4v4h-1.500" stroke-width="1"/><rect x="17.500" y=".5" width="10" height="10" rx="2" stroke="#6a6964"/><path d="M20 3l5 5M25 3l-5 5" stroke-width="1.800" stroke="#3a3935"/></svg>
<div class="t" style="left:85px;top:660px;letter-spacing:-0.115px">Wall Time:</div>
<div class="inp" style="left:162px;letter-spacing:-0.129px">1350843811.87</div>
<div class="t" style="left:366px;top:660px;letter-spacing:-0.235px">Wall Elapsed:</div>
<div class="inp" style="left:462px;letter-spacing:-0.276px">1431.97</div>
<div class="t" style="left:666px;top:660px;letter-spacing:-0.595px">ROS Time:</div>
<div class="inp" style="left:742px;letter-spacing:-0.129px">1350843811.87</div>
<div class="t" style="left:946px;top:660px;letter-spacing:-0.696px">ROS Elapsed:</div>
<div class="inp" style="left:1041px;letter-spacing:-0.276px">1431.97</div>
<div class="b" style="left:1246px;top:657px;width:83px;height:25px;letter-spacing:-0.278px">Reset</div>
</div></div>

<svg class="abs" style="left:476px;top:69px" width="18" height="24" viewBox="0 0 18 24"><path d="M2.500 2.500v16.800l3.900-3.700 2.700 5.700 2.500-1.200-2.700-5.500h5.300z" fill="#fff" stroke="#000" stroke-width="1.200" stroke-linejoin="round"/></svg>

</body></html>
